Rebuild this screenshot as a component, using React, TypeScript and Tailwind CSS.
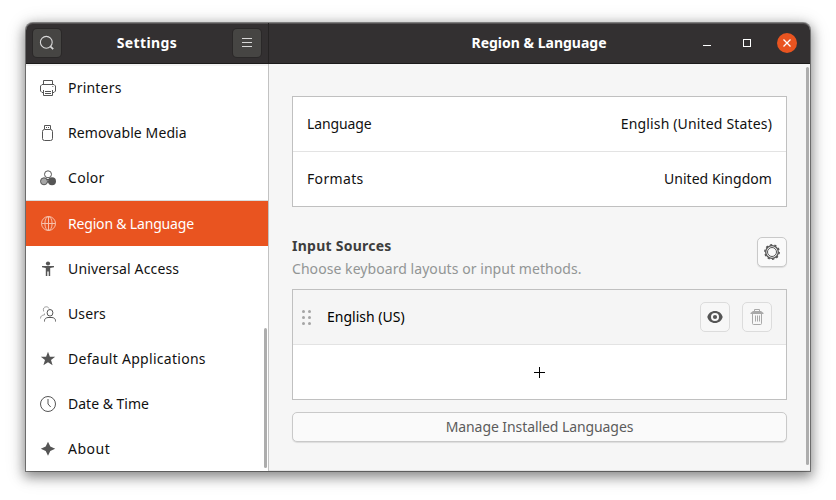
import type { ReactNode } from "react";

const stroke = { fill: "none", stroke: "currentColor", strokeWidth: 1 };

function Icon({ children, className = "" }: { children: ReactNode; className?: string }) {
  return (
    <svg viewBox="0 0 16 16" className={`h-4 w-4 shrink-0 ${className}`}>
      {children}
    </svg>
  );
}

const PrinterIcon = () => (
  <Icon>
    <path {...stroke} d="M3.5 4.5v-4h9v4M3.5 12.5H2L.5 11V6L2 4.5h12L15.500 6v5L14 12.500h-1.500M3.500 10v5.500h9V10M5 11.500h6M5 13.500h6" />
    <path {...stroke} strokeOpacity="0.6" d="M12 6.500h1.500" />
  </Icon>
);

const UsbIcon = () => (
  <Icon>
    <path {...stroke} d="M4.500 4V.500h6V4" />
    <rect {...stroke} x="2.500" y="4.500" width="10" height="11" rx="2" />
    <path {...stroke} d="M6 2.500h1M8 2.500h1" />
  </Icon>
);

const ColorIcon = () => (
  <Icon>
    <circle {...stroke} cx="8" cy="4.300" r="3.500" />
    <circle cx="4" cy="11.300" r="3.500" fill="#a6a6a6" stroke="currentColor" />
    <circle cx="12" cy="11.300" r="4" fill="currentColor" />
    <path {...stroke} d="M6.500 9.500h3M7 12h2" />
  </Icon>
);

const GlobeIcon = () => (
  <Icon>
    <circle {...stroke} cx="8.500" cy="7.500" r="7" />
    <ellipse {...stroke} cx="8.500" cy="7.500" rx="3.600" ry="7" />
    <path {...stroke} d="M1.500 7.500h14M8.500.500v14" />
  </Icon>
);

const AccessIcon = () => (
  <Icon>
    <circle cx="8" cy="2.500" r="2.100" fill="currentColor" />
    <path fill="currentColor" d="M2 5.100h12v1.200l-3.800.600v8.200H8.700v-4.500H7.300v4.500H5.800V6.900L2 6.300z" />
  </Icon>
);

const UsersIcon = () => (
  <Icon>
    <path {...stroke} strokeOpacity="0.55" d="M3.700 5.500C2.700 2.500 4 .800 6.200.800c1.300 0 2.300.500 2.800 1.700M.500 12.500c0-2.500 1.500-3.300 4-3.700V7.500" />
    <ellipse {...stroke} cx="10" cy="6.800" rx="2.900" ry="3.300" />
    <path {...stroke} d="M4.500 15.500v-.800c0-2 1.600-3 3.500-3.200h4c2 .200 3.500 1.200 3.500 3.200v.800" />
  </Icon>
);

const StarIcon = () => (
  <Icon>
    <path fill="currentColor" d="M8 .800l1.900 4.900h5.300l-4.200 3.300 1.600 5.200L8 11.200l-4.600 3 1.600-5.200L.800 5.700h5.300z" />
  </Icon>
);

const ClockIcon = () => (
  <Icon>
    <circle {...stroke} cx="8" cy="8" r="7.500" />
    <path {...stroke} d="M8 3v5l2.700 3" />
  </Icon>
);

const SparkIcon = () => (
  <Icon>
    <path fill="currentColor" d="M8 .700l2.300 4.800L15.200 7.700l-4.900 2.300-2.300 4.800-2.300-4.800L.800 7.700l4.900-2.200z" />
  </Icon>
);

const SearchIcon = () => (
  <Icon>
    <circle {...stroke} strokeWidth="1.100" cx="7.300" cy="7.300" r="5.900" />
    <path {...stroke} strokeWidth="1.700" d="M11.300 11.300l2.900 2.900" />
  </Icon>
);

const GearIcon = () => (
  <Icon>
    <circle {...stroke} cx="8" cy="8" r="6.300" strokeWidth="1.300" />
    <circle {...stroke} cx="8" cy="8" r="7.200" strokeWidth="1.400" strokeDasharray="2.200 2.324" />
    <circle {...stroke} cx="8" cy="8" r="4.500" />
  </Icon>
);

const EyeIcon = () => (
  <Icon>
    <path
      fill="currentColor"
      fillRule="evenodd"
      d="M8 2C4.200 2 1.300 4.200.300 8c1 3.800 3.900 6 7.700 6s6.700-2.200 7.700-6C14.700 4.200 11.800 2 8 2zm0 2a4 4 0 1 1 0 8 4 4 0 0 1 0-8z"
    />
    <circle cx="8" cy="8" r="2.100" fill="currentColor" />
  </Icon>
);

const TrashIcon = () => (
  <Icon>
    <path {...stroke} d="M5.500 2.500V.500h5v2" />
    <path fill="currentColor" d="M4 2h8l2.500 2v1H1.500V4z" />
    <path {...stroke} d="M3.500 5v9.500q0 1 1 1h7q1 0 1-1V5M6.500 6.500v6M8.500 6.500v6M10.500 6.500v6" />
  </Icon>
);

interface Item {
  label: string;
  icon: ReactNode;
  tracking: string;
  selected?: boolean;
}

const items: Item[] = [
  { label: "Printers", icon: <PrinterIcon />, tracking: "tracking-[0.2px]" },
  { label: "Removable Media", icon: <UsbIcon />, tracking: "tracking-[0.1px]" },
  { label: "Color", icon: <ColorIcon />, tracking: "tracking-[0.3px]" },
  { label: "Region & Language", icon: <GlobeIcon />, tracking: "tracking-[-0.18px]", selected: true },
  { label: "Universal Access", icon: <AccessIcon />, tracking: "tracking-[0.15px]" },
  { label: "Users", icon: <UsersIcon />, tracking: "tracking-[0.1px]" },
  { label: "Default Applications", icon: <StarIcon />, tracking: "tracking-[0.28px]" },
  { label: "Date & Time", icon: <ClockIcon />, tracking: "tracking-normal" },
  { label: "About", icon: <SparkIcon />, tracking: "tracking-[0.5px]" },
];

function SidebarRow({ label, icon, tracking, selected }: Item) {
  return (
    <li
      className={
        selected
          ? "box-content flex h-[45px] items-center border-t border-[#d9dcdc] bg-[#e95420] pl-[14px] text-white"
          : "flex h-[45px] items-center pl-[14px] text-[#111]"
      }
    >
      <span className={selected ? "text-[#f7c0ab]" : "text-[#555]"}>{icon}</span>
      <span className={`ml-3 whitespace-nowrap ${tracking}`}>{label}</span>
    </li>
  );
}

const headerButton =
  "flex h-7 w-7 items-center justify-center rounded-[4px] bg-[#464543] text-[#d8d8d8] shadow-[0_0_0_1px_#2a2828]";

export default function App() {
  return (
    <div className="h-[500px] w-[836px] overflow-hidden bg-white pl-[26px] pt-[23px] font-['Noto_Sans','Open_Sans',sans-serif] text-[14px] leading-[20px]">
      <div className="flex h-[448px] w-[784px] flex-col rounded-t-[7px] shadow-[0_0_0_1px_rgba(0,0,0,0.4),0_4px_12px_2px_rgba(0,0,0,0.4),0_3px_20px_3px_rgba(0,0,0,0.12)]">
        <header className="flex h-[41px] shrink-0 overflow-hidden rounded-t-[7px] border-b border-[#1c1b1b] bg-[#333031] font-bold text-white shadow-[inset_0_1px_0_#555253]">
          <div className="flex w-[243px] shrink-0 items-center justify-between border-r border-[#252323] px-[7px]">
            <button className={headerButton}>
              <SearchIcon />
            </button>
            <span className="tracking-[0.4px]">Settings</span>
            <button className={headerButton}>
              <Icon>
                <path {...stroke} d="M3 3.500h10M3 7.500h10M3 11.500h10" />
              </Icon>
            </button>
          </div>
          <div className="flex min-w-0 flex-1 items-center">
            <div className="ml-[112px] w-[316px] text-center">
              <span>Region &amp; Language</span>
            </div>
          </div>
          <div className="flex w-[113px] shrink-0 items-center gap-6">
            <Icon>
              <path {...stroke} d="M6 10.500h8" />
            </Icon>
            <Icon>
              <rect {...stroke} x="6.500" y="4.500" width="7" height="7" />
            </Icon>
            <svg viewBox="0 0 20 20" className="h-5 w-5 shrink-0">
              <circle cx="10" cy="10" r="10" fill="#e95420" />
              <path d="M6.500 6.500l7 7M13.500 6.500l-7 7" stroke="white" strokeWidth="1.300" fill="none" />
            </svg>
          </div>
        </header>

        <div className="flex flex-1 bg-[#f6f6f6]">
          <nav className="relative w-[243px] shrink-0 border-r border-[#c2c2c2] bg-white pt-px shadow-[inset_0_2px_0_#f3f3f3]">
            <ul>
              {items.map((item) => (
                <SidebarRow key={item.label} {...item} />
              ))}
            </ul>
            <div className="absolute bottom-[3px] right-px h-[140px] w-[3px] rounded-full bg-[#adadad]" />
          </nav>

          <main className="relative flex-1 border-b border-[#e2e2e2] px-[23px] pt-8 text-[#111]">
            <section className="border border-[#c0c0c0] bg-white">
              <div className="flex h-[55px] items-center justify-between border-b border-[#e3e3e3] px-[14px]">
                <span className="tracking-[-0.12px]">Language</span>
                <span className="tracking-[0.16px]">English (United States)</span>
              </div>
              <div className="flex h-[54px] items-center justify-between px-[14px]">
                <span className="tracking-[0.35px]">Formats</span>
                <span className="tracking-[0.05px]">United Kingdom</span>
              </div>
            </section>

            <div className="mt-[27px] flex h-[55px] justify-between">
              <div className="leading-[23px]">
                <h2 className="font-bold tracking-[0.25px] text-[#3d3d3d]">Input Sources</h2>
                <p className="tracking-[0.06px] text-[#929595]">Choose keyboard layouts or input methods.</p>
              </div>
              <button className="mt-[3px] flex h-[30px] w-[30px] items-center justify-center rounded-[5px] border border-[#c9c9c9] bg-[#fafafa] text-[#555] shadow-[0_1px_1px_rgba(0,0,0,0.1)]">
                <GearIcon />
              </button>
            </div>

            <section className="border border-[#c0c0c0] bg-white">
              <div className="flex h-[55px] items-center border-b border-[#e3e3e3] bg-[#f5f5f5] pl-[9px] pr-[14px] text-black">
                <div className="grid grid-cols-2 gap-[3px]">
                  {[0, 1, 2, 3, 4, 5].map((n) => (
                    <i key={n} className="h-[3px] w-[3px] rounded-full bg-[#a5a5a5]" />
                  ))}
                </div>
                <span className="ml-4 flex-1">English (US)</span>
                <button className="flex h-[30px] w-[30px] items-center justify-center rounded-[5px] border border-[#dcdcdc] bg-[#f7f7f7] text-[#555]">
                  <EyeIcon />
                </button>
                <button className="ml-3 flex h-[30px] w-[30px] items-center justify-center rounded-[5px] border border-[#dcdcdc] bg-[#f7f7f7] text-[#a9a9a9]">
                  <TrashIcon />
                </button>
              </div>
              <div className="flex h-[54px] items-center justify-center text-black">
                <svg viewBox="0 0 11 11" className="h-[11px] w-[11px]">
                  <path {...stroke} d="M0 5.500h11M5.500 0v11" />
                </svg>
              </div>
            </section>

            <button className="mt-3 flex h-[30px] w-full items-center justify-center rounded-[5px] border border-[#c9c9c9] bg-[#fafafa] text-[#5c5c5c] shadow-[0_1px_1px_rgba(0,0,0,0.1)]">
              <span className="tracking-[-0.08px]">Manage Installed Languages</span>
            </button>
            <div className="absolute right-px top-[3px] h-[398px] w-[3px] rounded-full bg-[#adadad]" />
          </main>
        </div>
      </div>
    </div>
  );
}
